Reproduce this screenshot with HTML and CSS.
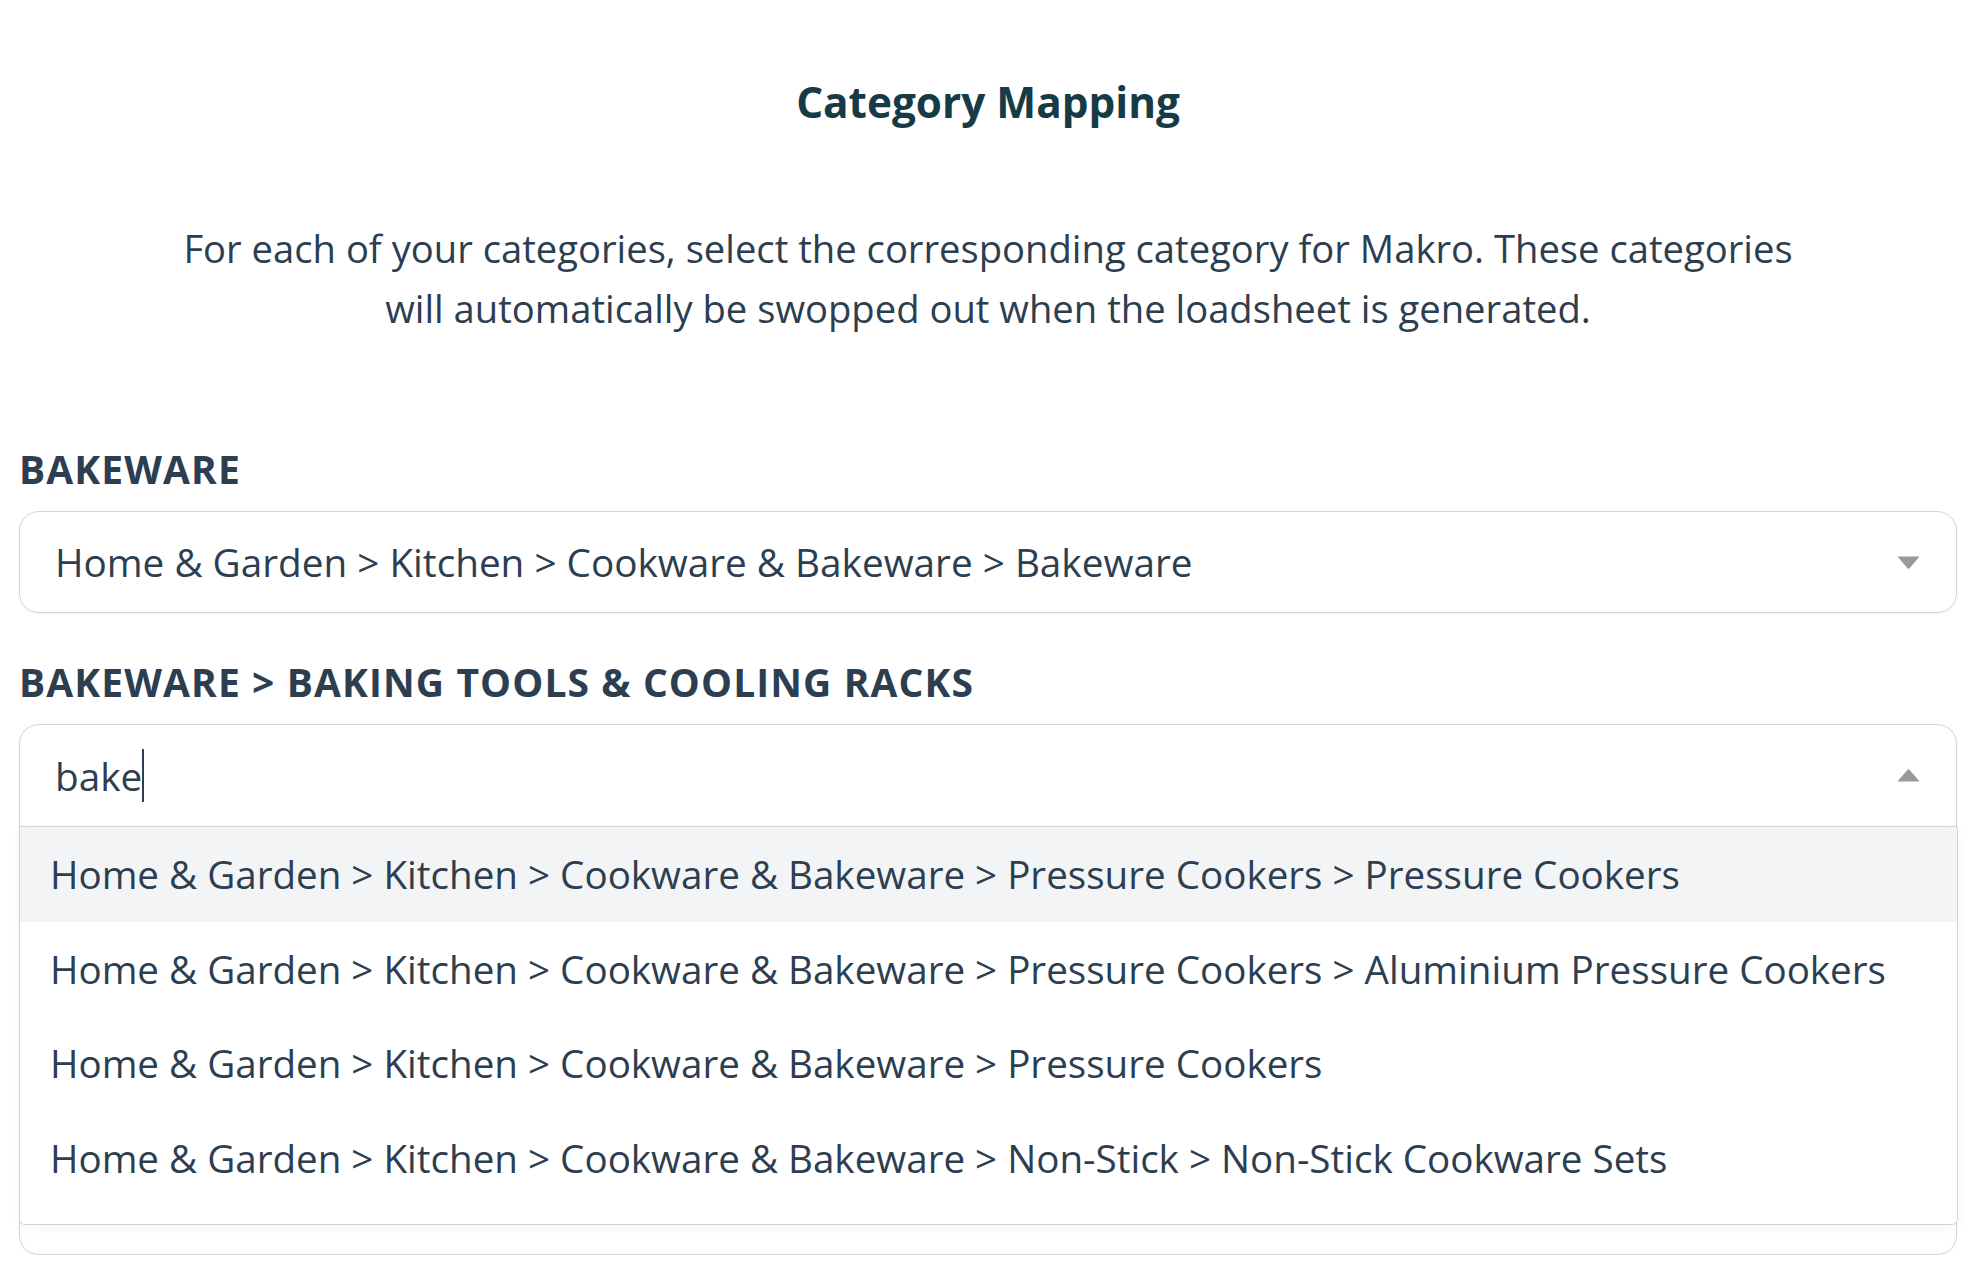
FILE: index.html
```html
<!DOCTYPE html>
<html lang="en">
<head>
<meta charset="utf-8">
<title>Category Mapping</title>
<link rel="stylesheet" href="styles.css">
</head>
<body>
<main class="page">
  <h1 class="title">Category Mapping</h1>
  <p class="intro">For each of your categories, select the corresponding category for Makro. These categories will automatically be swopped out when the loadsheet is generated.</p>

  <section class="fields">
    <div class="field">
      <label class="field-label">Bakeware</label>
      <div class="select">
        <div class="control">
          <span class="value">Home &amp; Garden &gt; Kitchen &gt; Cookware &amp; Bakeware &gt; Bakeware</span>
          <svg class="arrow" width="23" height="13" viewBox="0 0 23 13"><path d="M0.5 0.5H22.5L12.3 12.4Q11.5 13.2 10.7 12.4Z" fill="#999"/></svg>
        </div>
      </div>
    </div>

    <div class="field">
      <label class="field-label">Bakeware &gt; Baking Tools &amp; Cooling Racks</label>
      <div class="select select-open">
        <div class="control">
          <span class="value">bake<span class="caret"></span></span>
          <svg class="arrow" width="23" height="13" viewBox="0 0 23 13"><path d="M0.5 12.5H22.5L12.3 0.6Q11.5 -0.2 10.7 0.6Z" fill="#999"/></svg>
        </div>
        <ul class="menu">
          <li class="option option-active">Home &amp; Garden &gt; Kitchen &gt; Cookware &amp; Bakeware &gt; Pressure Cookers &gt; Pressure Cookers</li>
          <li class="option">Home &amp; Garden &gt; Kitchen &gt; Cookware &amp; Bakeware &gt; Pressure Cookers &gt; Aluminium Pressure Cookers</li>
          <li class="option">Home &amp; Garden &gt; Kitchen &gt; Cookware &amp; Bakeware &gt; Pressure Cookers</li>
          <li class="option">Home &amp; Garden &gt; Kitchen &gt; Cookware &amp; Bakeware &gt; Non-Stick &gt; Non-Stick Cookware Sets</li>
        </ul>
      </div>
    </div>
  </section>
</main>
</body>
</html>
```

FILE: styles.css
```css
* {
  box-sizing: border-box;
}

html, body {
  margin: 0;
  background: #ffffff;
}

body {
  font-family: "Open Sans", "Noto Sans", sans-serif;
  color: #2c3e50;
  overflow: hidden;
}

.page {
  padding: 77px 21px 0 19px;
}

.title {
  margin: 0;
  text-align: center;
  font-size: 42.3px;
  line-height: 50px;
  font-weight: 700;
  color: #163b47;
}

.intro {
  margin: 91px auto 0;
  max-width: 1660px;
  text-align: center;
  font-size: 38.2px;
  line-height: 60px;
}

.fields {
  margin-top: 104px;
}

.field + .field {
  margin-top: 42px;
}

.field-label {
  display: block;
  font-size: 39px;
  line-height: 53px;
  font-weight: 700;
  text-transform: uppercase;
  letter-spacing: 1.1px;
  margin-bottom: 16px;
}

.select {
  border: 1px solid #d1d5db;
  border-radius: 20px;
  background: #fff;
  box-shadow: 0 1px 2px rgba(0, 0, 0, 0.05);
}

.control {
  height: 100px;
  display: flex;
  align-items: center;
  justify-content: space-between;
  padding: 0 36px 0 35px;
  font-size: 38.7px;
}

.value {
  display: flex;
  align-items: center;
  white-space: nowrap;
}

.caret {
  display: inline-block;
  width: 2px;
  height: 53px;
  margin-left: 0;
  background: #2c3e50;
}

.arrow {
  flex: none;
}

.select-open {
  padding-bottom: 29px;
}

.select-open .control {
  height: 101px;
}

.menu {
  list-style: none;
  margin: 0 -2px 0 -1px;
  padding: 0 0 19px;
  border: 1px solid #d1d5db;
  border-radius: 0 0 6px 6px;
  background: #fff;
  box-shadow: 0 4px 12px rgba(0, 0, 0, 0.04);
}

.option {
  height: 94.6px;
  display: flex;
  align-items: center;
  padding-left: 30px;
  font-size: 38.6px;
  white-space: nowrap;
}

.option-active {
  background: #f3f4f6;
}
```
